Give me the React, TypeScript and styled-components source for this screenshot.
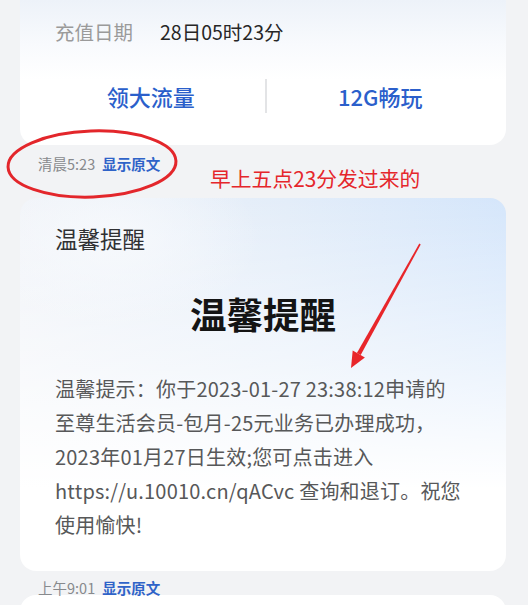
import React from "react";
import styled, { createGlobalStyle } from "styled-components";

const GlobalStyle = createGlobalStyle`
    html, body {
        margin: 0;
        padding: 0;
        background: #f2f3f5;
        font-family: "Noto Sans CJK SC", "Noto Sans", sans-serif;
    }
`

const Page = styled.div`
    position: relative;
    width: 528px;
    height: 605px;
    overflow: hidden;
    padding: 0 22px 0 20px;
    box-sizing: border-box;
`

const Card = styled.div<{ $cut?: boolean }>`
    background: #ffffff;
    border-radius: ${p => p.$cut ? "0 0 16px 16px" : "16px"};
    box-sizing: border-box;
`

const RechargeCard = styled(Card)`
    background: linear-gradient(180deg, #edf2f9 0%, #f8fafd 30%, #ffffff 55%);
    padding-bottom: 25px;
`

const InfoRow = styled.div`
    display: flex;
    align-items: center;
    gap: 27px;
    height: 62px;
    padding-left: 35px;
    font-size: 19.5px;

    & > .label {
        color: #9a9a9a;
    }

    & > .value {
        color: #262626;
    }
`

const ActionRow = styled.div`
    display: grid;
    grid-template-columns: 1fr 2px 1fr;
    align-items: center;
    height: 48px;
    margin-top: 10px;
    padding: 0 12px 0 17px;
`

const ActionButton = styled.div`
    text-align: center;
    color: #2b5fcb;
    font-size: 22px;
    font-weight: 500;
`

const Divider = styled.div`
    width: 2px;
    height: 34px;
    background: #e3e4e6;
`

const TimeRow = styled.div<{ $top: number; $height: number }>`
    display: flex;
    align-items: flex-start;
    gap: 7px;
    height: ${p => p.$height}px;
    padding: ${p => p.$top}px 0 0 18px;
    box-sizing: border-box;
    line-height: 20px;
    font-size: 14.5px;

    & > .time {
        color: #888a8d;
    }

    & > .raw {
        color: #2f63c8;
        font-weight: 700;
    }
`

const NoticeCard = styled(Card)`
    background:
        radial-gradient(ellipse 150px 90px at 90px 40px, rgba(248, 250, 253, 0.85), rgba(248, 250, 253, 0) 100%),
        linear-gradient(180deg, rgba(255, 255, 255, 0) 0%, rgba(255, 255, 255, 0.55) 45%, #ffffff 78%),
        linear-gradient(90deg, #f0f3f8 0%, #e3edf9 55%, #d5e6fb 100%);
    padding: 25px 35px 29px 35px;
`

const NoticeHeader = styled.div`
    font-size: 22.5px;
    line-height: 30px;
    color: #303133;
`

const NoticeTitle = styled.div`
    margin-top: 36px;
    text-align: center;
    font-size: 36.5px;
    line-height: 50px;
    font-weight: 700;
    color: #141414;
`

const NoticeBody = styled.p`
    margin: 33px 0 0;
    font-size: 20px;
    line-height: 34px;
    letter-spacing: 0.2px;
    color: #575859;
    white-space: nowrap;
`

const NextCard = styled(Card)`
    height: 40px;
`

const Markup = styled.svg`
    position: absolute;
    left: 0;
    top: 0;
    pointer-events: none;
`

const MarkupNote = styled.span`
    position: absolute;
    left: 210px;
    top: 163px;
    font-size: 20.8px;
    line-height: 30px;
    color: #e5262b;
    white-space: nowrap;
`

export default function App() {
    return (
        <>
            <GlobalStyle />
            <Page>
                <RechargeCard $cut>
                    <InfoRow>
                        <span className="label">充值日期</span>
                        <span className="value">28日05时23分</span>
                    </InfoRow>
                    <ActionRow>
                        <ActionButton>领大流量</ActionButton>
                        <Divider />
                        <ActionButton>12G畅玩</ActionButton>
                    </ActionRow>
                </RechargeCard>

                <TimeRow $top={9} $height={53}>
                    <span className="time">清晨5:23</span>
                    <span className="raw">显示原文</span>
                </TimeRow>

                <NoticeCard>
                    <NoticeHeader>温馨提醒</NoticeHeader>
                    <NoticeTitle>温馨提醒</NoticeTitle>
                    <NoticeBody>
                        温馨提示：你于2023-01-27 23:38:12申请的<br />
                        至尊生活会员-包月-25元业务已办理成功，<br />
                        2023年01月27日生效;您可点击进入<br />
                        https://u.10010.cn/qACvc 查询和退订。祝您<br />
                        使用愉快!
                    </NoticeBody>
                </NoticeCard>

                <TimeRow $top={7} $height={24}>
                    <span className="time">上午9:01</span>
                    <span className="raw">显示原文</span>
                </TimeRow>

                <NextCard />

                <Markup width="528" height="605" viewBox="0 0 528 605">
                    <ellipse cx="92" cy="164" rx="84" ry="33" fill="none" stroke="#e3262b" strokeWidth="3" transform="rotate(-2 92 164)" />
                    <polygon points="420.7,244.4 419.3,243.6 356.9,352.9 360.7,355.1" fill="#e8262a" />
                    <polygon points="351,368 352.7,350.6 364.9,357.4" fill="#e8262a" />
                </Markup>
                <MarkupNote>早上五点23分发过来的</MarkupNote>
            </Page>
        </>
    );
}
